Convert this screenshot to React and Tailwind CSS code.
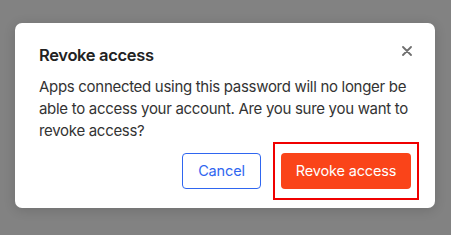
import React from "react";

const font = { fontFamily: "Inter, 'Noto Sans', sans-serif" };

export default function App() {
  return (
    <div
      className="h-[235px] w-[451px] bg-[#828282] pt-[23px] pl-[15px]"
      style={font}
    >
      <div className="w-[420px] rounded-[7px] bg-white px-6 pt-5 pb-[19px] shadow-[0_2px_12px_rgba(0,0,0,0.15)]">
        <div className="flex items-start justify-between">
          <h2 className="text-[16.5px] leading-6 font-semibold tracking-[-0.02em] text-[#222]">
            Revoke access
          </h2>
          <button className="mt-[3px] mr-[-1px] flex h-[10px] w-[10px] items-center justify-center text-[#6f6f6f]">
            <svg width="10" height="10" viewBox="0 0 10 10" fill="none">
              <path
                d="M1 1L9 9M9 1L1 9"
                stroke="currentColor"
                strokeWidth="1.8"
                strokeLinecap="round"
              />
            </svg>
          </button>
        </div>
        <p className="mt-[9px] text-[15px] leading-[22px] tracking-[-0.02em] text-[#333]">
          Apps connected using this password will no longer be able to access
          your account. Are you sure you want to revoke access?
        </p>
        <div className="mt-[11px] flex justify-end gap-5">
          <button className="h-9 w-[79px] rounded-[4px] border border-[#2f66f0] text-[14.5px] tracking-[-0.01em] text-[#2f66f0]">
            Cancel
          </button>
          <div className="relative">
            <button className="h-9 w-[130px] rounded-[4px] bg-[#fa4419] text-[14.5px] tracking-[-0.01em] text-white">
              Revoke access
            </button>
            <div className="pointer-events-none absolute -inset-x-[8px] -inset-y-[11px] border-2 border-[#f00000]" />
          </div>
        </div>
      </div>
    </div>
  );
}
